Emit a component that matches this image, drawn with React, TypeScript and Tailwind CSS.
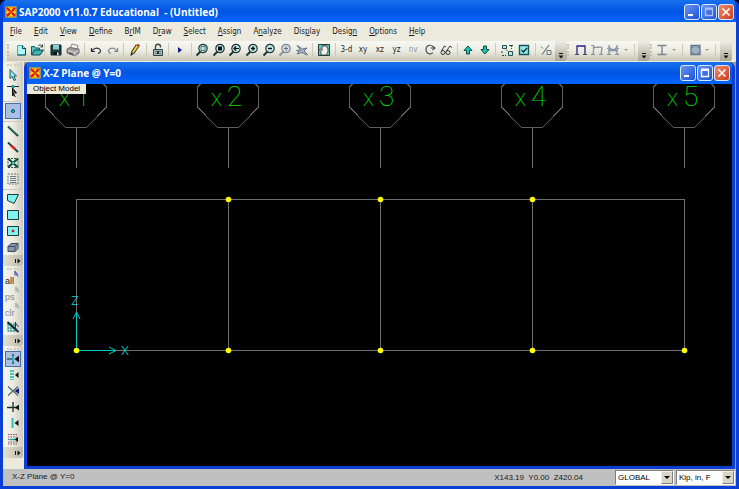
import type { ReactNode } from "react"
import clsx from "clsx"

const Icon = ({ children }: { children: ReactNode }) => (
  <svg viewBox="0 0 16 16" className="h-4 w-4 shrink-0" fill="none" stroke="#1c2b2b" strokeWidth="1">
    {children}
  </svg>
)

const Logo = () => (
  <svg viewBox="0 0 12 12" className="h-3 w-3 shrink-0" aria-hidden="true">
    <rect x="0.5" y="0.5" width="11" height="11" fill="#ffd21e" />
    <path d="M1 1.500h10M1 10.500h10M1.500 1v10M10.500 1v10" stroke="#f07a10" strokeWidth="1" strokeDasharray="2 1" />
    <path d="M2 2l8 8M10 2l-8 8" stroke="#d81808" strokeWidth="2.400" />
    <path d="M6 1.500v3M6 7.500v3M1.500 6h3M7.500 6h3" stroke="#ffc81e" strokeWidth="1.400" />
    <rect x="4.800" y="4.800" width="2.400" height="2.400" fill="#e83a10" />
  </svg>
)

/* ---------- icons ---------- */

const Lens = ({ dim, children }: { dim?: boolean; children?: ReactNode }) => (
  <Icon>
    <path d="M6.500 9.500L2.500 13.500" stroke={dim ? "#8a93a0" : "#1d3434"} strokeWidth="2" />
    <circle cx="9" cy="6.500" r="4.200" fill={dim ? "#d5dade" : "#bfe8e2"} stroke={dim ? "#7d8898" : "#26393a"} strokeWidth="1.200" />
    {children}
  </Icon>
)

const icons: Record<string, ReactNode> = {
  New: (
    <Icon>
      <path d="M4.500 3.500h5l3 3v6.500h-8z" fill="#a8f8f6" stroke="#35b6bb" />
      <path d="M9.500 3.500v3h3M12.500 6.500V13h-8" stroke="#183c44" />
    </Icon>
  ),
  Open: (
    <Icon>
      <path d="M2.500 12.500v-8h3l1 1.500h4v2" fill="#58c8c4" stroke="#155a5c" />
      <path d="M2.500 13l3-5h9l-3.500 5z" fill="#3fb5b2" stroke="#0f4446" />
      <path d="M9 4c1.500-2 3.500-1 4 .5M13.500 2.500v2.500h-2" stroke="#26393a" />
    </Icon>
  ),
  Save: (
    <Icon>
      <path d="M3 3h10v10H3z" fill="#20393c" stroke="#142426" />
      <path d="M5 3h6v4.500H5z" fill="#7fd3cf" stroke="none" />
      <path d="M5.500 10h5v3h-5z" fill="#0b1415" stroke="none" />
      <path d="M9 10.500h1.500V13H9z" fill="#e8f2f2" stroke="none" />
    </Icon>
  ),
  Print: (
    <Icon>
      <path d="M5 7l2-5 6 1.500-1.500 5" fill="#f2f2f2" stroke="#8a8a8a" />
      <path d="M2 7l3-1.500 9 1.500v4l-4 3-8-3z" fill="#9a9a9a" stroke="#6c6c6c" />
      <path d="M3 8.500l7 2 3.500-2M10 10.500v3" stroke="#dedede" />
      <path d="M4 11l4 1.500" stroke="#3a3a3a" />
    </Icon>
  ),
  Undo: (
    <Icon>
      <path d="M3.500 6v3.500H7M3.500 9.500C5 7 8 5.500 10.500 6.500c3 1.200 2.500 4-.5 5" stroke="#2b2f35" strokeWidth="1.200" />
    </Icon>
  ),
  Redo: (
    <Icon>
      <path d="M12.500 6v3.500H9M12.500 9.500C11 7 8 5.500 5.500 6.500c-3 1.200-2.500 4 .5 5" stroke="#7c8794" strokeWidth="1.200" />
    </Icon>
  ),
  "Refresh window": (
    <Icon>
      <path d="M10.500 3.500L5.500 11" stroke="#2c2a10" strokeWidth="4" />
      <path d="M10.300 3.800L5.800 10.500" stroke="#e8d23c" strokeWidth="2.200" />
      <path d="M10 2.500l2.500 1.500" stroke="#d02020" strokeWidth="2" />
      <path d="M4 10.500l-.5 3.500 3-2z" fill="#111" stroke="none" />
    </Icon>
  ),
  "Lock model": (
    <Icon>
      <path d="M5.500 7.500V4.500c0-3 5-3 5 0v1" stroke="#3b4a4a" strokeWidth="1.400" />
      <path d="M3.500 7.500h9v6h-9z" fill="#a9bdb9" stroke="#2d4242" />
      <path d="M5 9.500h6M5 11.500h6" stroke="#5f7a78" />
      <path d="M8 9v3" stroke="#111" strokeWidth="1.500" />
    </Icon>
  ),
  "Run analysis": (
    <Icon>
      <path d="M6 5l4 3-4 3z" fill="#12188c" stroke="none" />
    </Icon>
  ),
  "Rubber band zoom": (
    <Lens>
      <path d="M7 4.500h4v4H7z" stroke="#3c6664" strokeWidth="0.800" />
    </Lens>
  ),
  "Restore full view": (
    <Lens>
      <path d="M7 4.500h4v4H7z" fill="#0a0f0f" stroke="none" />
    </Lens>
  ),
  "Restore previous zoom": (
    <Lens>
      <path d="M12 6.500H7M9 4.500L7 6.500l2 2" stroke="#0a0f0f" strokeWidth="1.200" />
    </Lens>
  ),
  "Zoom in": (
    <Lens>
      <path d="M9 4.500v4M7 6.500h4" stroke="#0a0f0f" strokeWidth="1.400" />
    </Lens>
  ),
  "Zoom out": (
    <Lens>
      <path d="M7 6.500h4" stroke="#0a0f0f" strokeWidth="1.400" />
    </Lens>
  ),
  Pan: (
    <Lens dim>
      <path d="M9 4.500v4M7 6.500h4" stroke="#66707e" />
    </Lens>
  ),
  "Fly view": (
    <Icon>
      <path d="M3 3.500l5.500 3.500 4.500-1-3 3 3.500 3.500-1 .5-4.500-2.500L3 12l2-2.500-2.500-1 4-.5z" fill="#a8b1be" stroke="#66738a" />
    </Icon>
  ),
  Hand: (
    <Icon>
      <path d="M2.500 2.500h11v11h-11z" fill="#54cfc6" stroke="#1d3b3c" />
      <path d="M5 13V10L3.500 7.500l1-.5L6 8.500V4.500l1-.8.6.8V3.300l1.200-.3.5 1.500.9-.7.8.8v1.200l.9.2v4L10.500 13z" fill="#f6efe8" stroke="#40302c" strokeWidth="0.800" />
    </Icon>
  ),
  Rotate: (
    <Icon>
      <path d="M11 10.500c-2 2.500-7 1.500-7-3s5-5.500 7-2.500" stroke="#4d5a66" strokeWidth="1.200" />
      <path d="M8.500 6h4.500M10.500 4l2.500 2-2.500 2" stroke="#4d5a66" strokeWidth="1.200" />
    </Icon>
  ),
  Perspective: (
    <Icon>
      <circle cx="4" cy="10.500" r="2" stroke="#26393a" />
      <circle cx="9" cy="10.500" r="2" stroke="#26393a" />
      <path d="M2.500 9L5.500 4 7 5M7.500 9L11 4l2 1.500M6 10.500h1" stroke="#26393a" />
    </Icon>
  ),
  "Move up": (
    <Icon>
      <path d="M8 4l4 4.500H9.500V12h-3V8.500H4z" fill="#18c8b4" stroke="#0b4a4a" />
    </Icon>
  ),
  "Move down": (
    <Icon>
      <path d="M8 12l4-4.500H9.500V4h-3v3.500H4z" fill="#18c8b4" stroke="#0b4a4a" />
    </Icon>
  ),
  "Object shrink": (
    <Icon>
      <path d="M3.500 3.500h4v3h-4zM9.500 9.500h4v4h-4z" fill="#b7ebe0" stroke="#205050" />
      <path d="M10 3.500h4M12.500 3v4M3 9v3M3 13.500h4M7 7.500l2 2" stroke="#205050" strokeDasharray="2 1" />
    </Icon>
  ),
  "Display options": (
    <Icon>
      <path d="M3.500 3.500h9v9h-9z" fill="#8ff0ea" stroke="#1f4f58" strokeWidth="1.400" />
      <path d="M5.500 8l2 2 3.500-4" stroke="#0e2a38" strokeWidth="1.400" />
    </Icon>
  ),
  "Assign to group": (
    <Icon>
      <path d="M11 3L4 12.500" stroke="#6d7782" strokeWidth="1.200" />
      <path d="M3 4.500l2 2M9 8.500h4v4H9z" stroke="#6d7782" />
    </Icon>
  ),
  "Undeformed shape": (
    <Icon>
      <path d="M4 13V4h8v9" stroke="#29208e" strokeWidth="1.300" />
      <path d="M2 12.500h4M10 12.500h4" stroke="#4a4a68" />
    </Icon>
  ),
  "Deformed shape": (
    <Icon>
      <path d="M4 13L5 5c2.500 1.500 5-1 8 0.500L12 13" stroke="#8992a6" strokeWidth="1.300" />
      <path d="M2 12.500h4M10 12.500h4M2 3.500h3l-1 3" stroke="#8992a6" />
    </Icon>
  ),
  "Member forces": (
    <Icon>
      <path d="M4 13V3M12 13V3M4 4c1.500 5 6.500 5 8 0M4 8.500h8" stroke="#8992a6" strokeWidth="1.300" />
      <path d="M2 12.500h4M10 12.500h4M2 6l2 2M14 6l-2 2" stroke="#8992a6" />
    </Icon>
  ),
  "Steel design": (
    <Icon>
      <path d="M3.500 3.500h9M8 3.500v9M3.500 12.500h9" stroke="#7c8691" strokeWidth="1.400" />
    </Icon>
  ),
  "Concrete design": (
    <Icon>
      <path d="M4 3.500h9v9H4z" fill="#9fb0c2" stroke="#64758a" strokeWidth="1.300" />
      <path d="M5.500 11h1M10.500 11h1M5.500 5.500h1M10.500 5.500h1" stroke="#4c5b6c" />
    </Icon>
  ),
  Pointer: (
    <Icon>
      <path d="M5 2.500v9l2.200-2L9 13.500l1.500-.7L9 9h2.500z" fill="#7ff0ee" stroke="#27525e" />
    </Icon>
  ),
  Reshape: (
    <Icon>
      <path d="M2 3.500h12M8 2v3" stroke="#1c2b2b" />
      <path d="M6.500 2.500h3v2.500h-3z" fill="#1aa392" stroke="none" />
      <path d="M7.500 5v8l1.500-1.500 1.200 2.500M7.500 5l4 5H9.500" fill="#222" stroke="#111" />
    </Icon>
  ),
  "Draw joint": (
    <Icon>
      <circle cx="8" cy="8" r="1.500" fill="#28c8c0" stroke="#104850" />
    </Icon>
  ),
  "Draw frame": (
    <Icon>
      <path d="M3 3.500l10 9.500" stroke="#0d4a3c" strokeWidth="2" />
      <path d="M3 3l9 8.500" stroke="#4fa592" strokeWidth="0.600" />
    </Icon>
  ),
  "Quick frame": (
    <Icon>
      <path d="M3 3.500l10 9.500" stroke="#0d4a3c" strokeWidth="1.800" />
      <path d="M6 6.500l4 3.500" stroke="#e02828" strokeWidth="2.400" />
    </Icon>
  ),
  "Quick braces": (
    <Icon>
      <path d="M3 3.500h10v9H3z" stroke="#27584e" strokeDasharray="2 1" />
      <path d="M3 3.500l10 9M13 3.500l-10 9" stroke="#0d4a3c" strokeWidth="2" />
      <path d="M7 7h2.500v2H7z" fill="#38c8b0" stroke="none" />
    </Icon>
  ),
  "Secondary beams": (
    <Icon>
      <path d="M3 3h10v10H3z" stroke="#6c7b86" strokeDasharray="2 1" />
      <path d="M5 5.500h6M5 7.500h6M5 9.500h6M5 11.500h6" stroke="#6c7b86" />
    </Icon>
  ),
  "Poly area": (
    <Icon>
      <path d="M2.500 3.500h11l-4.500 9-6.500-3z" fill="#7df4f2" stroke="#1d3b3c" />
    </Icon>
  ),
  "Rectangular area": (
    <Icon>
      <path d="M2.500 3.500h11v9h-11z" fill="#7df4f2" stroke="#1d3b3c" />
    </Icon>
  ),
  "Quick area": (
    <Icon>
      <path d="M2.500 3.500h11v9h-11z" fill="#7df4f2" stroke="#1d3b3c" />
      <path d="M7 7h2v2H7z" fill="#d01818" stroke="#d01818" strokeWidth="0.500" />
    </Icon>
  ),
  Solid: (
    <Icon>
      <path d="M3 7.500l3-3h7v5l-3 3H3z" fill="#8795a8" stroke="#3e4b62" />
      <path d="M3 7.500h7v5M10 7.500l3-3" stroke="#3e4b62" />
    </Icon>
  ),
  "Clear intersecting": (
    <Icon>
      <path d="M3 3.500v9M6 3.500v9M9 3.500v9M3 6h8M3 9h8M3 12h8" stroke="#2a9a96" />
      <path d="M2.500 3l11 10" stroke="#102424" strokeWidth="1.800" />
      <path d="M10.500 3v6l3 4M10.500 4l3 4" stroke="#2a2a80" />
    </Icon>
  ),
  "Snap to points": (
    <Icon>
      <path d="M2 8h6M8 3v10" stroke="#14282c" strokeWidth="1.200" />
      <path d="M8 5v6" stroke="#23b8b0" strokeWidth="2" />
      <path d="M14 4.500v7L9.500 8z" fill="#0c1414" stroke="none" />
    </Icon>
  ),
  "Snap to ends": (
    <Icon>
      <path d="M6 3v10M8 3v10" stroke="#23b8b0" strokeWidth="1.600" strokeDasharray="2 1" />
      <path d="M13.500 5v6L10 8z" fill="#0c1414" stroke="none" />
    </Icon>
  ),
  "Snap to intersections": (
    <Icon>
      <path d="M3 3.500l10 9M13 3.500l-10 9" stroke="#4b6d6e" strokeWidth="1.200" />
      <path d="M14 5v6L9.500 8z" fill="#1c1c78" stroke="none" />
    </Icon>
  ),
  "Snap to perpendicular": (
    <Icon>
      <path d="M2 8.500h12M8 3v10" stroke="#14342f" strokeWidth="1.300" />
      <path d="M14 5.500v6l-4-3z" fill="#0c1414" stroke="none" />
    </Icon>
  ),
  "Snap to lines": (
    <Icon>
      <path d="M7.500 3v10" stroke="#23b8b0" strokeWidth="1.800" />
      <path d="M13.500 5v6L9.500 8z" fill="#0c1414" stroke="none" />
    </Icon>
  ),
  "Snap to grid": (
    <Icon>
      <path d="M3 3.500h10M3 6h10M3 8.500h10M3 11h10M3 13h10" stroke="#7b5560" strokeDasharray="1.500 1" />
      <path d="M5 8.500h5" stroke="#1aa89c" strokeWidth="1.500" />
      <path d="M13 6v5L9.500 8.500z" fill="#0c1414" stroke="none" />
    </Icon>
  ),
}

/* ---------- toolbars ---------- */

const textTools: Record<string, string> = { "3-d": "text-[#1d2626]", xy: "text-[#1d2626]", xz: "text-[#1d2626]", yz: "text-[#1d2626]", nv: "text-[#8b929c]" }

const Tool = ({ name, active }: { name: string; active?: boolean }) => (
  <button
    type="button"
    aria-label={name}
    className={clsx(
      "flex h-4 w-4 shrink-0 items-center justify-center whitespace-nowrap font-['DejaVu_Sans_Condensed','DejaVu_Sans',sans-serif] text-[8px]",
      active && "bg-[#a9bfe3] outline outline-1 -outline-offset-1 outline-[#4a6ea9]"
    )}
  >
    {textTools[name] ? <span className={textTools[name]}>{name}</span> : icons[name]}
  </button>
)

const Group = ({ width, tools, last }: { width: string; tools: string[]; last?: boolean }) => (
  <div className={clsx("flex h-3.5 items-center justify-around px-0.5", width, !last && "border-r border-[#cdcab9]")}>
    {tools.map((name) => (
      <Tool key={name} name={name} />
    ))}
  </div>
)

const Grip = () => <span className="h-3 w-1 shrink-0 border-l-2 border-dotted border-[#c5c2b2]" />

const MoreDown = () => (
  <button type="button" aria-label="Toolbar options" className="-mb-0.5 flex h-5 w-3 shrink-0 items-end justify-center rounded-r-[3px] bg-linear-to-b from-[#efeee4] to-[#a9a795] pb-0.5">
    <svg viewBox="0 0 6 6" className="h-1.5 w-1.5">
      <path d="M1 .5h4" stroke="#111" />
      <path d="M.5 2.500h5L3 5.500z" fill="#111" />
    </svg>
  </button>
)

const MoreRight = () => (
  <button type="button" aria-label="Toolbar options" className="flex h-[11px] w-full shrink-0 items-center justify-end rounded-b-[3px] bg-linear-to-r from-[#e4e2d6] to-[#bcb9a8] pr-0.5">
    <svg viewBox="0 0 6 6" className="h-1.5 w-1.5">
      <path d="M.5 1v4" stroke="#111" />
      <path d="M2.500 .5v5L5.500 3z" fill="#111" />
    </svg>
  </button>
)

const DropArrow = () => (
  <button type="button" aria-label="More" className="flex h-4 w-2 items-center justify-center">
    <svg viewBox="0 0 4 4" className="h-1 w-1">
      <path d="M0 1h4L2 3z" fill="#9b9a8f" />
    </svg>
  </button>
)

const barClass = "flex h-5 items-center rounded-r-[3px] bg-linear-to-b from-[#f8f8f3] via-[#ecebe0] to-[#c8c5b4] pb-0.5"

const TopToolbar = () => (
  <div className="flex h-[21px] items-start bg-[#ebeadd] pl-1">
    <div className={barClass}>
      <Grip />
      <Group width="w-[34px]" tools={["New", "Open"]} />
      <Group width="w-[40px]" tools={["Save", "Print"]} />
      <Group width="w-[39px]" tools={["Undo", "Redo"]} />
      <Group width="w-[23px]" tools={["Refresh window"]} />
      <Group width="w-[22px]" tools={["Lock model"]} />
      <Group width="w-[23px]" tools={["Run analysis"]} />
      <Group
        width="w-[121px]"
        tools={["Rubber band zoom", "Restore full view", "Restore previous zoom", "Zoom in", "Zoom out", "Pan", "Fly view"]}
      />
      <Group width="w-[23px]" tools={["Hand"]} />
      <Group width="w-[122px]" tools={["3-d", "xy", "xz", "yz", "nv", "Rotate", "Perspective"]} />
      <Group width="w-[38px]" tools={["Move up", "Move down"]} />
      <Group width="w-[40px]" tools={["Object shrink", "Display options"]} />
      <Group width="w-[19px]" tools={["Assign to group"]} last />
      <MoreDown />
    </div>
    <div className={barClass}>
      <Grip />
      <Group width="w-[51px]" tools={["Undeformed shape", "Deformed shape", "Member forces"]} last />
      <DropArrow />
      <span className="ml-1 h-3 w-1 border-l border-[#cdcab9]" />
      <MoreDown />
    </div>
    <div className={barClass}>
      <Grip />
      <Tool name="Steel design" />
      <DropArrow />
      <span className="mx-1 h-3 w-px bg-[#cdcab9]" />
      <Tool name="Concrete design" />
      <DropArrow />
      <span className="mx-1 h-3 w-px bg-[#cdcab9]" />
      <MoreDown />
    </div>
  </div>
)

const sideBars: string[][][] = [
  [
    ["Pointer", "Reshape"],
    ["Draw joint"],
    ["Draw frame", "Quick frame", "Quick braces", "Secondary beams"],
    ["Poly area", "Rectangular area", "Quick area", "Solid"],
  ],
  [["all", "ps", "clr", "Clear intersecting"]],
  [["Snap to points", "Snap to ends", "Snap to intersections", "Snap to perpendicular", "Snap to lines", "Snap to grid"]],
]

const SelectTool = ({ name }: { name: string }) => (
  <button type="button" className={clsx("flex h-4 w-4 items-end text-[9px] leading-3", name === "all" ? "text-[#222]" : "text-[#7e8794]")}>
    {name}
    <svg viewBox="0 0 5 6" className="h-1.5 w-[5px] shrink-0 self-start">
      <path d="M1 0v4.500M1 .5l3 3M2 3l2 2.500" stroke={name === "all" ? "#2a2aa0" : "#8e98a8"} fill="none" />
    </svg>
  </button>
)

const SideToolbar = () => (
  <div className="w-[21px] shrink-0 bg-[#ebeadd]">
    {sideBars.map((bar, i) => (
      <div key={i} className="w-5 rounded-b-[3px] bg-linear-to-r from-[#f8f8f3] via-[#ecebe0] to-[#cfccbc]">
        <div className="flex h-[5px] items-center justify-center">
          <span className="w-3 border-t-2 border-dotted border-[#d0cdbd]" />
        </div>
        {bar.map((group, g) => (
          <div key={g} className={clsx("flex flex-col items-center", g > 0 && "mt-0.5 border-t border-[#cdcab9] pt-px")}>
            {group.map((name) =>
              ["all", "ps", "clr"].includes(name) ? (
                <SelectTool key={name} name={name} />
              ) : (
                <Tool key={name} name={name} active={name === "Draw joint" || name === "Snap to points"} />
              )
            )}
          </div>
        ))}
        <MoreRight />
      </div>
    ))}
  </div>
)

/* ---------- windows ---------- */

const WindowButtons = ({ dimMax }: { dimMax?: boolean }) => {
  const base = "flex h-4 w-4 items-center justify-center rounded-[3px] border border-[#dfe8fb] bg-linear-to-br"
  return (
    <div className="flex gap-px">
      <button type="button" aria-label="Minimize" className={clsx(base, "from-[#6a92ee] to-[#1d4fd8]")}>
        <svg viewBox="0 0 12 12" className="h-3 w-3">
          <path d="M2 9h5" stroke="#fff" strokeWidth="2" />
        </svg>
      </button>
      <button type="button" aria-label="Maximize" className={clsx(base, "from-[#6a92ee] to-[#1d4fd8]")}>
        <svg viewBox="0 0 12 12" className="h-3 w-3">
          <path d="M2.500 3v6.500h7V3M2 3h8" stroke={dimMax ? "#a9c0f4" : "#fff"} strokeWidth="1.300" fill="none" />
          <path d="M2 2.500h8" stroke={dimMax ? "#a9c0f4" : "#fff"} strokeWidth="2" />
        </svg>
      </button>
      <button type="button" aria-label="Close" className={clsx(base, "from-[#ee8a6c] to-[#cf3a14]")}>
        <svg viewBox="0 0 12 12" className="h-3 w-3">
          <path d="M2.500 2.500l7 7M9.500 2.500l-7 7" stroke="#fff" strokeWidth="1.600" />
        </svg>
      </button>
    </div>
  )
}

const titleBar = "flex items-center bg-linear-to-b from-[#1a72ee] via-[#0054e3] to-[#0466fb]"

const menus = [
  ["", "F", "ile"],
  ["", "E", "dit"],
  ["", "V", "iew"],
  ["", "D", "efine"],
  ["B", "r", "IM"],
  ["D", "r", "aw"],
  ["", "S", "elect"],
  ["", "A", "ssign"],
  ["A", "n", "alyze"],
  ["Dis", "p", "lay"],
  ["Desig", "n", ""],
  ["", "O", "ptions"],
  ["", "H", "elp"],
]

const gridX = [49, 201, 353, 505, 657]
const joints = [
  [201, 115], [353, 115], [505, 115],
  [49, 266], [201, 266], [353, 266], [505, 266], [657, 266],
]

const ModelView = () => (
  <svg viewBox="0 0 705 381" className="block w-full overflow-visible" role="img" aria-label="X-Z plane elevation">
    <g fill="none" stroke="#6e6e6e" shapeRendering="crispEdges">
      {gridX.map((x) => (
        <g key={x}>
          <path d={`M${x - 27.5} 0L${x - 30.5} 3V23L${x - 10.5} 43.500H${x + 10.5}L${x + 30.5} 23V3L${x + 27.5} 0`} stroke="#5c5c5c" />
          <path d={`M${x + 0.5} 44V84M${x + 0.5} 115V267`} />
        </g>
      ))}
      <path d="M49 115.500H657M49 266.500H657" />
    </g>
    {gridX.map((x, i) => (
      <text key={x} y="22" fill="#00e800" fontFamily="Roboto, sans-serif" fontWeight="100">
        <tspan x={x - 17} fontSize="23">x</tspan>
        <tspan x={x - 1} fontSize="28">{i + 1}</tspan>
      </text>
    ))}
    <g fill="none" stroke="#00c8c8">
      <path d="M49.500 266V229M46 235l3.500-7 3.500 7M49 266.500H88M82 263l7 3.500-7 3.500" />
    </g>
    <g fill="#00d8d8" fontFamily="Roboto, sans-serif" fontWeight="300" fontSize="13">
      <text x="44" y="221">Z</text>
      <text x="94" y="271">X</text>
    </g>
    {joints.map(([x, y]) => (
      <circle key={`${x}-${y}`} cx={x + 0.5} cy={y + 0.5} r="2.800" fill="#ffff00" />
    ))}
  </svg>
)

const StatusSelect = ({ label, value }: { label: string; value: string }) => (
  <div className="relative h-[15px] w-[59px] border border-[#808080] border-b-white border-r-white bg-white">
    <select
      aria-label={label}
      defaultValue={value}
      className="block h-full w-full appearance-none bg-transparent pl-0.5 text-[8px] leading-3 text-black outline-none"
    >
      <option>{value}</option>
    </select>
    <span className="pointer-events-none absolute inset-y-0 right-0 flex w-3 items-center justify-center border border-[#f2f0e6] border-b-[#808080] border-r-[#808080] bg-[#d8d4c6]">
      <svg viewBox="0 0 6 3" className="h-[3px] w-1.5">
        <path d="M0 0h6L3 3z" fill="#000" />
      </svg>
    </span>
  </div>
)

const App = () => {
  return (
    <div className="min-h-screen bg-black font-['Liberation_Sans',Arial,sans-serif]">
      <div className="flex min-h-screen flex-col overflow-hidden rounded-t-md border-x-[3px] border-b-[3px] border-[#0a3fd6]">
        {/* Main title bar */}
        <header className={clsx(titleBar, "-mx-[3px] h-[22px] shrink-0 px-[5px] pt-0.5")}>
          <Logo />
          <h1 className="ml-0.5 flex-1 whitespace-pre font-['Open_Sans',sans-serif] text-[10px] font-bold text-white">
            {"SAP2000 v11.0.7 Educational  - (Untitled)"}
          </h1>
          <WindowButtons dimMax />
        </header>

        {/* Menu */}
        <nav className="flex h-[19px] shrink-0 items-center gap-3 bg-[#ebeadd] pl-[7px] font-['DejaVu_Sans_Condensed','DejaVu_Sans',sans-serif] text-[8px] text-[#1a1a1a]">
          {menus.map(([before, key, after]) => (
            <button key={before + key + after} type="button" className="whitespace-nowrap">
              {before}
              <span className="underline">{key}</span>
              {after}
            </button>
          ))}
        </nav>

        <TopToolbar />

        <div className="flex flex-1 bg-[#9c9a8e] pr-px">
          <SideToolbar />
          {/* Model window */}
          <main className="flex min-w-0 flex-1 flex-col overflow-hidden rounded-t-md border-x-[3px] border-b-[3px] border-[#0a3fd6]">
            <div className={clsx(titleBar, "-mx-[3px] h-[22px] shrink-0 px-[5px]")}>
              <Logo />
              <h2 className="ml-0.5 flex-1 font-['Open_Sans',sans-serif] text-[10px] font-bold text-white">X-Z Plane @ Y=0</h2>
              <WindowButtons />
            </div>
            <div className="relative flex-1 bg-black">
              <ModelView />
              <span className="absolute left-0 top-0 bg-[#ece9d8] px-1.5 text-[8px] leading-[10px] text-black">Object Model</span>
            </div>
          </main>
        </div>

        {/* Status bar */}
        <footer className="flex h-[17px] shrink-0 items-center bg-[#c0c0c0] text-[8px] text-[#1a1a1a]">
          <span className="flex-1 self-start pl-[9px] pt-0.5">X-Z Plane @ Y=0</span>
          <span className="mr-8 whitespace-pre">{"X143.19  Y0.00  Z420.04"}</span>
          <div className="flex gap-0.5 pr-px">
            <StatusSelect label="Coordinate system" value="GLOBAL" />
            <StatusSelect label="Units" value="Kip, in, F" />
          </div>
        </footer>
      </div>
    </div>
  )
}

export default App
